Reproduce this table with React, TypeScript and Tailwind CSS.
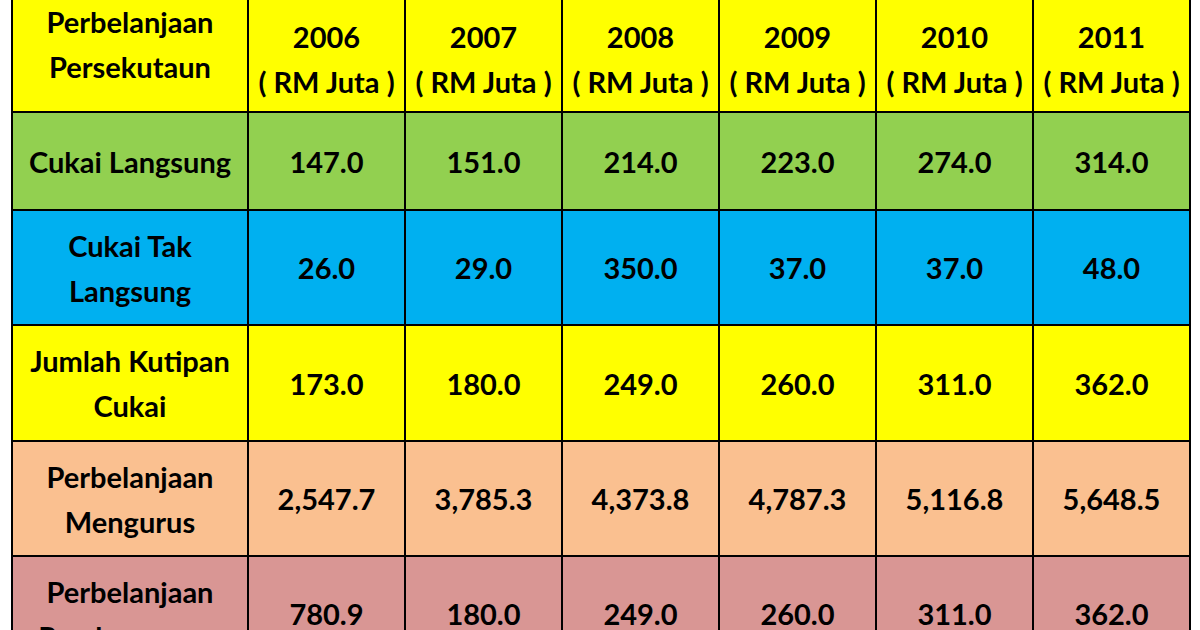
import React from 'react';

type Row = {
  label: string[];
  values: string[];
  bg: string;
  h: string;
};

const YEARS = ['2006', '2007', '2008', '2009', '2010', '2011'];

const ROWS: Row[] = [
  { label: ['Cukai Langsung'], values: ['147.0', '151.0', '214.0', '223.0', '274.0', '314.0'], bg: 'bg-[#92d050]', h: 'h-[98px]' },
  { label: ['Cukai Tak', 'Langsung'], values: ['26.0', '29.0', '350.0', '37.0', '37.0', '48.0'], bg: 'bg-[#00b0f0]', h: 'h-[115px]' },
  { label: ['Jumlah Kutipan', 'Cukai'], values: ['173.0', '180.0', '249.0', '260.0', '311.0', '362.0'], bg: 'bg-[#ffff00]', h: 'h-[116px]' },
  { label: ['Perbelanjaan', 'Mengurus'], values: ['2,547.7', '3,785.3', '4,373.8', '4,787.3', '5,116.8', '5,648.5'], bg: 'bg-[#fac090]', h: 'h-[115px]' },
  { label: ['Perbelanjaan', 'Pembangunan'], values: ['780.9', '180.0', '249.0', '260.0', '311.0', '362.0'], bg: 'bg-[#d99694]', h: 'h-[115px]' },
];

const cell = 'border-r-2 border-b-2 border-black flex flex-col items-center justify-center text-center whitespace-nowrap';

const App: React.FC = () => {
  return (
    <div className="w-[1200px] h-[630px] overflow-hidden bg-white pl-[11px] font-['Lato',sans-serif] font-bold text-[29px] leading-[45px] text-black">
      <div className="grid grid-cols-[236px_repeat(6,157px)] border-l-2 border-black w-fit">
        {/* Header */}
        <div className={`${cell} h-[113px] bg-[#ffff00] pb-[24px]`}>
          <span>Perbelanjaan</span>
          <span>Persekutaun</span>
        </div>
        {YEARS.map((y) => (
          <div key={y} className={`${cell} h-[113px] bg-[#ffff00] pt-[6px]`}>
            <span>{y}</span>
            <span>( RM Juta )</span>
          </div>
        ))}

        {/* Body */}
        {ROWS.map((row, i) => (
          <React.Fragment key={i}>
            <div className={`${cell} ${row.h} ${row.bg}`}>
              {row.label.map((l) => (
                <span key={l}>{l}</span>
              ))}
            </div>
            {row.values.map((v, j) => (
              <div key={j} className={`${cell} ${row.h} ${row.bg}`}>
                {v}
              </div>
            ))}
          </React.Fragment>
        ))}
      </div>
    </div>
  );
};

export default App;
